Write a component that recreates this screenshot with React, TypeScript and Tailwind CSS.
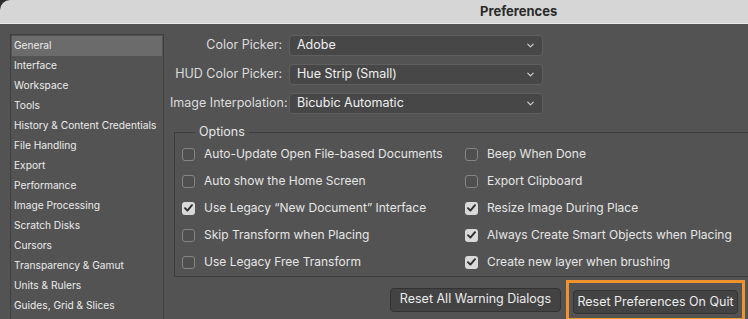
import { ChevronDown } from 'lucide-react'

const sections = [
  'General',
  'Interface',
  'Workspace',
  'Tools',
  'History & Content Credentials',
  'File Handling',
  'Export',
  'Performance',
  'Image Processing',
  'Scratch Disks',
  'Cursors',
  'Transparency & Gamut',
  'Units & Rulers',
  'Guides, Grid & Slices',
]

const pickers = [
  { label: 'Color Picker:', value: 'Adobe' },
  { label: 'HUD Color Picker:', value: 'Hue Strip (Small)' },
  { label: 'Image Interpolation:', value: 'Bicubic Automatic' },
]

const leftOptions = [
  { label: 'Auto-Update Open File-based Documents', checked: false },
  { label: 'Auto show the Home Screen', checked: false },
  { label: 'Use Legacy \u201cNew Document\u201d Interface', checked: true },
  { label: 'Skip Transform when Placing', checked: false },
  { label: 'Use Legacy Free Transform', checked: false },
]

const rightOptions = [
  { label: 'Beep When Done', checked: false },
  { label: 'Export Clipboard', checked: false },
  { label: 'Resize Image During Place', checked: true },
  { label: 'Always Create Smart Objects when Placing', checked: true },
  { label: 'Create new layer when brushing', checked: true },
]

function Checkbox({ label, checked }: { label: string; checked: boolean }) {
  return (
    <label className="flex items-center h-[27px] gap-[9px]">
      {checked ? (
        <span className="w-[13px] h-[13px] rounded-[3px] bg-[#d9d9d9] flex items-center justify-center">
          <svg width="9" height="8" viewBox="0 0 9 8" fill="none">
            <path d="M1 4.2 L3.4 6.6 L8 1.2" stroke="#2f2f2f" strokeWidth="1.9" strokeLinecap="round" strokeLinejoin="round" />
          </svg>
        </span>
      ) : (
        <span className="w-[13px] h-[13px] rounded-[3px] border border-[#858585] bg-[#4f4f4f]" />
      )}
      <span className="text-[12px] text-[#e6e6e6] whitespace-nowrap">{label}</span>
    </label>
  )
}

export default function App() {
  return (
    <div className="w-[748px] h-[319px] overflow-hidden bg-[#2b2b2b] font-['Inter','Liberation_Sans',sans-serif]">
      <div className="h-[24px] rounded-tl-[10px] bg-[#d6d6d6] border-b border-[#ececec] flex items-center pl-[480px]">
        <span className="text-[13px] font-bold text-[#2a2a2a]">Preferences</span>
      </div>
      <div className="h-[295px] bg-[#535353] flex">
        <aside className="ml-[10px] mt-[10px] w-[154px] h-[300px] border border-[#3f3f3f] p-px">
          {sections.map((s, i) => (
            <div
              key={s}
              className={`h-[20px] flex items-center pl-[2px] text-[10.2px] text-[#ececec] whitespace-nowrap ${i === 0 ? 'bg-[#6b6b6b]' : ''}`}
            >
              {s}
            </div>
          ))}
        </aside>
        <main className="flex-1 flex flex-col pl-[6px]">
          <div className="flex flex-col gap-[8px] mt-[11px]">
            {pickers.map((p) => (
              <div key={p.label} className="flex items-center gap-[7px]">
                <span className="w-[112px] text-right text-[12.5px] text-[#dcdcdc] whitespace-nowrap">{p.label}</span>
                <div className="w-[254px] h-[21px] rounded-[4px] bg-[#474747] border border-[#5f5f5f] flex items-center pl-[7px] pr-[6px]">
                  <span className="flex-1 text-[12.5px] text-[#f0f0f0]">{p.value}</span>
                  <ChevronDown size={11} strokeWidth={2.6} className="text-[#cfcfcf]" />
                </div>
              </div>
            ))}
          </div>
          <fieldset className="mt-[9px] ml-[4px] -mr-[10px] h-[157px] border border-[#3c3c3c] pl-[7px]">
            <legend className="ml-[13px] px-[4px] text-[12.5px] text-[#e6e6e6]">Options</legend>
            <div className="grid grid-cols-[283px_1fr] mt-[-1px]">
              <div className="flex flex-col">
                {leftOptions.map((o) => (
                  <Checkbox key={o.label} {...o} />
                ))}
              </div>
              <div className="flex flex-col">
                {rightOptions.map((o) => (
                  <Checkbox key={o.label} {...o} />
                ))}
              </div>
            </div>
          </fieldset>
          <div className="flex justify-end items-start pr-[3px] mt-[3px]">
            <button className="mt-[8px] mr-[5px] w-[171px] h-[24px] rounded-[4px] bg-[#434343] border border-[#333] text-[12.5px] text-[#ececec]">
              Reset All Warning Dialogs
            </button>
            <div className="border-[3px] border-[#f0922e] px-[4px] pt-[5px] pb-[4px]">
              <button className="w-[165px] h-[24px] rounded-[4px] bg-[#434343] border border-[#333] text-[12.5px] text-[#ececec]">
                Reset Preferences On Quit
              </button>
            </div>
          </div>
        </main>
      </div>
    </div>
  )
}
